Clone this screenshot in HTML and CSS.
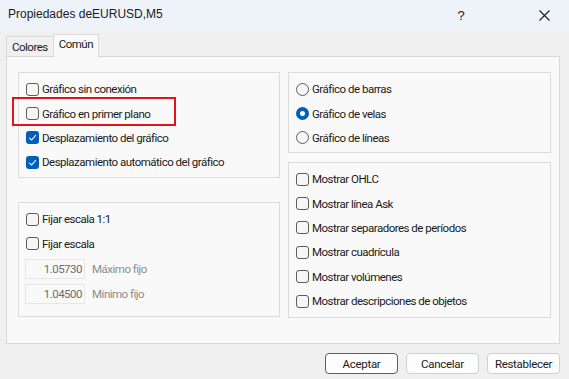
FILE: index.html
```html
<!DOCTYPE html>
<html>
<head>
  <title>Propiedades deEURUSD,M5</title>
  <link rel="stylesheet" href="styles.css">
</head>
<body>
  <div class="dialogo">
    <div class="titulo">
      <span class="titulo-texto">Propiedades deEURUSD,M5</span>
      <span class="titulo-ayuda">?</span>
      <span class="titulo-cerrar">
        <svg width="11" height="11" viewBox="0 0 11 11"><path d="M0.5 0.5 L10.5 10.5 M10.5 0.5 L0.5 10.5" stroke="#1b1b1b" stroke-width="1.1" fill="none"/></svg>
      </span>
    </div>

    <div class="pestanas">
      <div class="pestana">Colores</div>
      <div class="pestana activa">Común</div>
    </div>

    <div class="pagina">
      <div class="columna">
        <div class="grupo grupo-a">
          <label class="fila"><span class="check"></span>Gráfico sin conexión</label>
          <label class="fila"><span class="check"></span>Gráfico en primer plano</label>
          <label class="fila"><span class="check marcado"></span>Desplazamiento del gráfico</label>
          <label class="fila"><span class="check marcado"></span>Desplazamiento automático del gráfico</label>
          <div class="resaltado"></div>
        </div>
        <div class="grupo grupo-b">
          <label class="fila"><span class="check"></span>Fijar escala 1:1</label>
          <label class="fila"><span class="check"></span>Fijar escala</label>
          <div class="fila campo"><span class="entrada">1.05730</span><span class="deshabilitado">Máximo fijo</span></div>
          <div class="fila campo"><span class="entrada">1.04500</span><span class="deshabilitado">Mínimo fijo</span></div>
        </div>
      </div>
      <div class="columna">
        <div class="grupo grupo-c">
          <label class="fila"><span class="radio"></span>Gráfico de barras</label>
          <label class="fila"><span class="radio marcado"></span>Gráfico de velas</label>
          <label class="fila"><span class="radio"></span>Gráfico de líneas</label>
        </div>
        <div class="grupo grupo-d">
          <label class="fila"><span class="check"></span>Mostrar OHLC</label>
          <label class="fila"><span class="check"></span>Mostrar línea Ask</label>
          <label class="fila"><span class="check"></span>Mostrar separadores de períodos</label>
          <label class="fila"><span class="check"></span>Mostrar cuadrícula</label>
          <label class="fila"><span class="check"></span>Mostrar volúmenes</label>
          <label class="fila"><span class="check"></span>Mostrar descripciones de objetos</label>
        </div>
      </div>
    </div>

    <div class="botones">
      <button class="boton principal">Aceptar</button>
      <button class="boton">Cancelar</button>
      <button class="boton">Restablecer</button>
    </div>
  </div>
</body>
</html>
```

FILE: styles.css
```css
body {
  margin: 0;
  padding: 0;
  font-family: Roboto, "Liberation Sans", Arial, sans-serif;
  font-size: 11.5px;
  letter-spacing: -0.5px;
  color: #1a1a1a;
  background-color: #f0f0f0;
}

.dialogo {
  width: 569px;
  height: 379px;
  overflow: hidden;
}

.titulo {
  display: flex;
  align-items: center;
  height: 30px;
  background-color: #eef2f9;
  padding-left: 8px;
  letter-spacing: 0;
}

.titulo-texto {
  flex: 1;
  font-family: "Liberation Sans", Arial, sans-serif;
  font-size: 12px;
  color: #1b1b1b;
  padding-bottom: 2px;
}

.titulo-ayuda {
  width: 20px;
  margin-right: 68px;
  font-family: "Liberation Sans", Arial, sans-serif;
  font-size: 13px;
  text-align: center;
}

.titulo-cerrar {
  display: flex;
  width: 11px;
  margin-right: 19px;
}

.pestanas {
  display: flex;
  align-items: flex-end;
  height: 26px;
  padding-left: 6px;
}

.pestana {
  height: 19px;
  line-height: 20px;
  padding: 0 5px;
  border: 1px solid #dadada;
  border-bottom: none;
  background-color: #f0f0f0;
  color: #1a1a1a;
}

.pestana.activa {
  height: 22px;
  line-height: 19px;
  padding: 0 5px;
  margin-left: -1px;
  background-color: #f9f9f9;
  position: relative;
  top: 1px;
}

.pagina {
  display: flex;
  gap: 8px;
  height: 271px;
  margin: 0 9px 0 6px;
  padding: 15px 8px 0 11px;
  border: 1px solid #d9d9d9;
  background-color: #f9f9f9;
}

.columna {
  display: flex;
  flex-direction: column;
  width: 263px;
}

.columna + .columna {
  width: 264px;
}

.grupo {
  position: relative;
  border: 1px solid #dcdcdc;
  padding: 4px 7px 0 7px;
  box-sizing: border-box;
}

.grupo-a { height: 106px; }
.grupo-b { height: 115px; margin-top: 24px; }
.grupo-c { height: 81px; }
.grupo-d { height: 156px; margin-top: 9px; }

.fila {
  display: flex;
  align-items: center;
  height: 24.4px;
  white-space: nowrap;
}

.check {
  width: 11px;
  height: 11px;
  margin-right: 3px;
  border: 1px solid #5c5c5c;
  border-radius: 3px;
  background-color: #f6f6f6;
  flex-shrink: 0;
}

.check.marcado {
  width: 13px;
  height: 13px;
  border: none;
  background-color: #005fb8;
  background-image: url("data:image/svg+xml;utf8,<svg xmlns='http://www.w3.org/2000/svg' width='13' height='13'><path d='M3.3 6.8 L5.6 9 L9.8 4.2' stroke='white' stroke-width='1.1' fill='none'/></svg>");
}

.radio {
  width: 11px;
  height: 11px;
  margin-right: 3px;
  border: 1px solid #5c5c5c;
  border-radius: 50%;
  background-color: #f6f6f6;
  flex-shrink: 0;
}

.radio.marcado {
  width: 5px;
  height: 5px;
  border: 4px solid #005fb8;
  background-color: #ffffff;
}

.campo {
  height: 25.5px;
}

.entrada {
  width: 56px;
  height: 18px;
  line-height: 18px;
  margin-left: -1px;
  margin-right: 7px;
  padding-right: 2px;
  border: 1px solid #e6e6e6;
  text-align: right;
  color: #6d6d6d;
}

.deshabilitado {
  color: #8c8c8c;
}

.resaltado {
  position: absolute;
  left: -7px;
  top: 24px;
  width: 160px;
  height: 25px;
  border: 2px solid #e2131b;
}

.botones {
  display: flex;
  justify-content: flex-end;
  gap: 8px;
  padding: 9px 9px 0 0;
}

.boton {
  width: 73px;
  height: 21px;
  padding: 0;
  font-family: Roboto, "Liberation Sans", Arial, sans-serif;
  font-size: 11.5px;
  letter-spacing: -0.3px;
  color: #1a1a1a;
  background-color: #fdfdfd;
  border: 1px solid #d0d0d0;
  border-radius: 4px;
}

.boton.principal {
  border-color: #336a8f;
}
```
